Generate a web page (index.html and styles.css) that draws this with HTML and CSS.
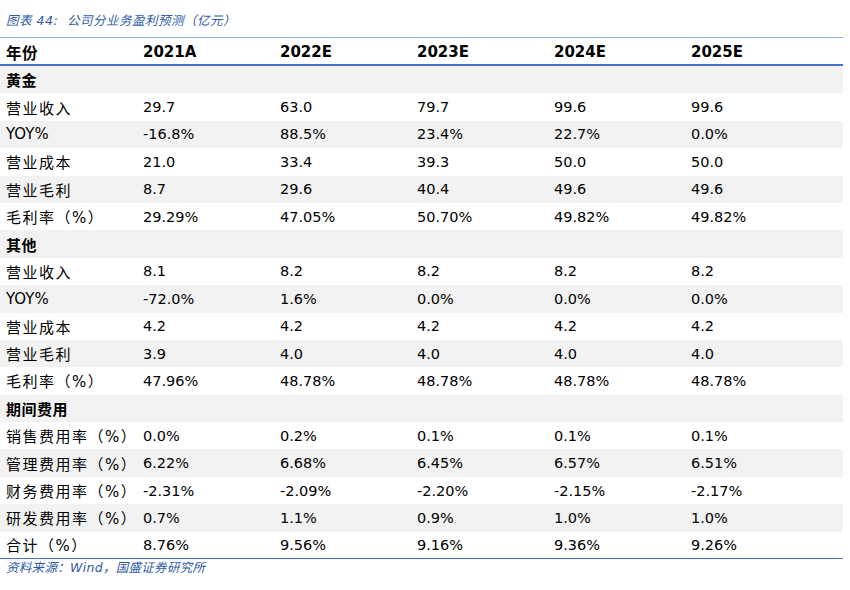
FILE: index.html
```html
<!DOCTYPE html>
<html lang="zh">
<head>
<meta charset="utf-8">
<link rel="stylesheet" href="styles.css">
</head>
<body>
<div class="page">
  <div class="title">图表 44:&nbsp; 公司分业务盈利预测（亿元）</div>
  <div class="table">
    <div class="row head">
      <div class="lab">年份</div><div>2021A</div><div>2022E</div><div>2023E</div><div>2024E</div><div>2025E</div>
    </div>
    <div class="row alt sec"><div class="lab">黄金</div><div></div><div></div><div></div><div></div><div></div></div>
    <div class="row"><div class="lab">营业收入</div><div>29.7</div><div>63.0</div><div>79.7</div><div>99.6</div><div>99.6</div></div>
    <div class="row alt"><div class="lab lat">YOY%</div><div>-16.8%</div><div>88.5%</div><div>23.4%</div><div>22.7%</div><div>0.0%</div></div>
    <div class="row"><div class="lab">营业成本</div><div>21.0</div><div>33.4</div><div>39.3</div><div>50.0</div><div>50.0</div></div>
    <div class="row alt"><div class="lab">营业毛利</div><div>8.7</div><div>29.6</div><div>40.4</div><div>49.6</div><div>49.6</div></div>
    <div class="row"><div class="lab">毛利率（%）</div><div>29.29%</div><div>47.05%</div><div>50.70%</div><div>49.82%</div><div>49.82%</div></div>
    <div class="row alt sec"><div class="lab">其他</div><div></div><div></div><div></div><div></div><div></div></div>
    <div class="row"><div class="lab">营业收入</div><div>8.1</div><div>8.2</div><div>8.2</div><div>8.2</div><div>8.2</div></div>
    <div class="row alt"><div class="lab lat">YOY%</div><div>-72.0%</div><div>1.6%</div><div>0.0%</div><div>0.0%</div><div>0.0%</div></div>
    <div class="row"><div class="lab">营业成本</div><div>4.2</div><div>4.2</div><div>4.2</div><div>4.2</div><div>4.2</div></div>
    <div class="row alt"><div class="lab">营业毛利</div><div>3.9</div><div>4.0</div><div>4.0</div><div>4.0</div><div>4.0</div></div>
    <div class="row"><div class="lab">毛利率（%）</div><div>47.96%</div><div>48.78%</div><div>48.78%</div><div>48.78%</div><div>48.78%</div></div>
    <div class="row alt sec"><div class="lab">期间费用</div><div></div><div></div><div></div><div></div><div></div></div>
    <div class="row"><div class="lab">销售费用率（%）</div><div>0.0%</div><div>0.2%</div><div>0.1%</div><div>0.1%</div><div>0.1%</div></div>
    <div class="row alt"><div class="lab">管理费用率（%）</div><div>6.22%</div><div>6.68%</div><div>6.45%</div><div>6.57%</div><div>6.51%</div></div>
    <div class="row"><div class="lab">财务费用率（%）</div><div>-2.31%</div><div>-2.09%</div><div>-2.20%</div><div>-2.15%</div><div>-2.17%</div></div>
    <div class="row alt"><div class="lab">研发费用率（%）</div><div>0.7%</div><div>1.1%</div><div>0.9%</div><div>1.0%</div><div>1.0%</div></div>
    <div class="row last"><div class="lab">合计（%）</div><div>8.76%</div><div>9.56%</div><div>9.16%</div><div>9.36%</div><div>9.26%</div></div>
  </div>
  <div class="source">资料来源：Wind，国盛证券研究所</div>
</div>
</body>
</html>
```

FILE: styles.css
```css
* { box-sizing: border-box; }
html, body { margin: 0; padding: 0; background: #fff; }
body {
  font-family: "DejaVu Sans", "Noto Sans CJK SC", sans-serif;
  color: #000;
}
.page {
  width: 843px;
  padding-top: 12px;
}
.title {
  height: 26px;
  padding-left: 6px;
  font-size: 12.5px;
  font-style: italic;
  letter-spacing: 0.5px;
  color: #2e5aa6;
  line-height: 18px;
  border-bottom: 1.5px solid #8eaadb;
}
.table { display: flex; flex-direction: column; }
.row {
  display: grid;
  grid-template-columns: 137px 137px 137px 137px 137px 1fr;
  height: 27.4px;
  align-items: center;
  font-size: 14.5px;
}
.row > div { padding-left: 6px; white-space: nowrap; }
.row .lab { font-size: 15px; letter-spacing: 1.5px; }
.row .lab.lat { letter-spacing: 0; }
.row.alt { background: #f2f2f2; }
.row.head {
  height: 28px;
  padding-top: 2px;
  font-weight: bold;
  font-size: 15px;
  border-bottom: 2px solid #4472c4;
}
.row.head .lab { font-weight: bold; font-size: 15.5px; letter-spacing: 0.5px; }
.row.sec .lab { font-weight: bold; letter-spacing: 0.5px; }
.row.last { border-bottom: 1.5px solid #4472c4; }
.source {
  padding-left: 6px;
  font-size: 12.5px;
  font-style: italic;
  letter-spacing: 0.3px;
  color: #2e5aa6;
  line-height: 18px;
}
```
